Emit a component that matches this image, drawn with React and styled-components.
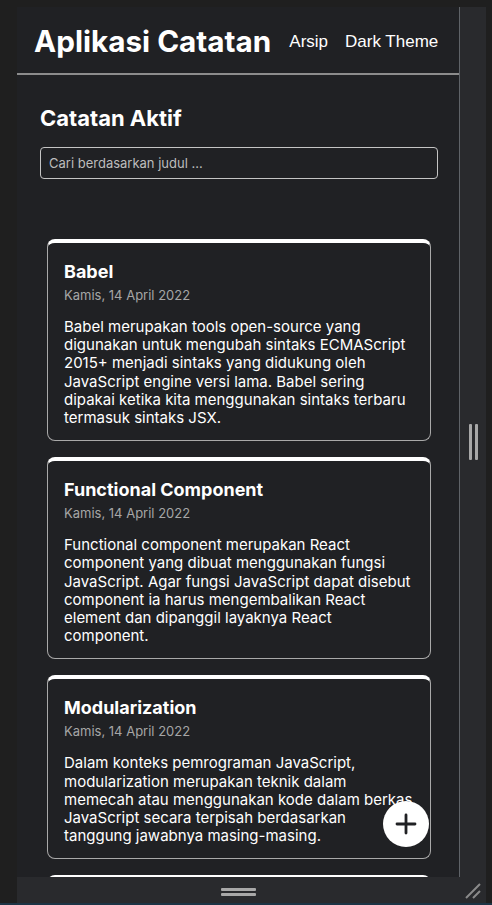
import React from 'react';
import styled, { createGlobalStyle } from 'styled-components';

const GlobalStyle = createGlobalStyle`
  html, body {
    margin: 0;
    padding: 0;
    background: #1f1f1f;
  }
  body {
    font-family: Inter, "Noto Sans", sans-serif;
  }
  * {
    box-sizing: border-box;
  }
`;

const notes = [
  {
    id: 1,
    title: 'Babel',
    date: 'Kamis, 14 April 2022',
    body: 'Babel merupakan tools open-source yang digunakan untuk mengubah sintaks ECMAScript 2015+ menjadi sintaks yang didukung oleh JavaScript engine versi lama. Babel sering dipakai ketika kita menggunakan sintaks terbaru termasuk sintaks JSX.',
  },
  {
    id: 2,
    title: 'Functional Component',
    date: 'Kamis, 14 April 2022',
    body: 'Functional component merupakan React component yang dibuat menggunakan fungsi JavaScript. Agar fungsi JavaScript dapat disebut component ia harus mengembalikan React element dan dipanggil layaknya React component.',
  },
  {
    id: 3,
    title: 'Modularization',
    date: 'Kamis, 14 April 2022',
    body: 'Dalam konteks pemrograman JavaScript, modularization merupakan teknik dalam memecah atau menggunakan kode dalam berkas JavaScript secara terpisah berdasarkan tanggung jawabnya masing-masing.',
  },
  {
    id: 4,
    title: 'Lifecycle',
    date: 'Kamis, 14 April 2022',
    body: 'Dalam konteks React component, lifecycle merupakan kumpulan method yang menjadi siklus hidup mulai dari component dibuat (constructor), dicetak (render), pasca-cetak (componentDidMount), dan sebagainya.',
  },
];

const Frame = styled.div`
  width: 492px;
  height: 905px;
  padding: 7px 6px 0 17px;
  display: flex;
  flex-direction: column;
  overflow: hidden;
`;

const DeviceRow = styled.div`
  display: flex;
  height: 870px;
`;

const Viewport = styled.div`
  position: relative;
  width: 443px;
  height: 870px;
  background: #202124;
  border-right: 1px solid #5f6368;
  overflow: hidden;
`;

const SidePanel = styled.div`
  width: 26px;
  background: #292a2d;
  display: flex;
  align-items: center;
  justify-content: center;
  gap: 3px;
`;

const VGrip = styled.span`
  width: 3px;
  height: 36px;
  background: #a8a8a8;
  border-radius: 1px;
`;

const BottomBar = styled.div`
  display: flex;
  height: 26px;
  background: #292a2d;
`;

const BottomHandle = styled.div`
  width: 443px;
  display: flex;
  flex-direction: column;
  align-items: center;
  justify-content: center;
  gap: 2px;
  padding-top: 4px;
`;

const HGrip = styled.span`
  width: 35px;
  height: 3px;
  background: #a8a8a8;
  border-radius: 1px;
`;

const Corner = styled.div`
  width: 26px;
  display: flex;
  align-items: flex-end;
  justify-content: flex-end;
  padding: 0 5px 4px 0;
`;

const BottomEdge = styled.div`
  height: 2px;
  background: #1d3445;
  margin-left: -17px;
  margin-right: -6px;
`;

const Header = styled.header`
  height: 68px;
  padding: 1px 17px 0;
  display: flex;
  align-items: center;
  gap: 18px;
  border-bottom: 2px solid #8c8c8c;
`;

const AppTitle = styled.h1`
  margin: 0;
  font-size: 29.7px;
  font-weight: 700;
  color: #ffffff;
  white-space: nowrap;
`;

const Nav = styled.nav`
  display: flex;
  gap: 17px;
  padding-top: 2px;
`;

const NavItem = styled.span`
  font-family: "Liberation Sans", Arial, sans-serif;
  font-size: 17px;
  color: #ffffff;
  white-space: nowrap;
`;

const Main = styled.main`
  padding: 0 21px 0 23px;
`;

const PageTitle = styled.h2`
  margin: 30px 0 16px;
  font-size: 22px;
  line-height: 26px;
  font-weight: 700;
  color: #ffffff;
`;

const SearchInput = styled.input`
  display: block;
  width: 398px;
  height: 32px;
  padding: 0 8px;
  border: 1px solid #c4c4c4;
  border-radius: 4px;
  background: transparent;
  color: #ffffff;
  font-family: Inter, "Noto Sans", sans-serif;
  font-size: 13px;
  outline: none;

  &::placeholder {
    color: #bdbdbd;
  }
`;

const NotesList = styled.section`
  margin-top: 60px;
  padding: 0 7px;
  display: flex;
  flex-direction: column;
  gap: 16px;
`;

const Card = styled.article`
  border: 1px solid #a9a9a9;
  border-top: 4px solid #ffffff;
  border-radius: 8px;
  padding: 17px 16px 13px;
  color: #ffffff;
`;

const CardTitle = styled.h3`
  margin: 0;
  font-size: 18px;
  line-height: 24px;
  font-weight: 700;
`;

const CardDate = styled.p`
  margin: 3px 0 0;
  font-size: 13px;
  line-height: 16px;
  color: #a6a6a6;
`;

const CardBody = styled.p`
  margin: 15px 0 0;
  font-size: 15px;
  line-height: 18.2px;
`;

const Fab = styled.button`
  position: absolute;
  right: 30px;
  bottom: 30px;
  width: 46px;
  height: 46px;
  border: none;
  border-radius: 50%;
  background: #ffffff;
  display: flex;
  align-items: center;
  justify-content: center;
  padding: 0;
  cursor: pointer;
`;

const PlusIcon = () => (
  <svg width="22" height="22" viewBox="0 0 22 22">
    <path d="M11 2v18M2 11h18" stroke="#202124" strokeWidth="2.8" strokeLinecap="round" />
  </svg>
);

const CornerIcon = () => (
  <svg width="16" height="16" viewBox="0 0 16 16">
    <path d="M1 15L15 1M8 15L15 8" stroke="#8a8a8a" strokeWidth="2" />
  </svg>
);

export default function App() {
  return (
    <>
      <GlobalStyle />
      <Frame>
        <DeviceRow>
          <Viewport>
            <Header>
              <AppTitle>Aplikasi Catatan</AppTitle>
              <Nav>
                <NavItem>Arsip</NavItem>
                <NavItem>Dark Theme</NavItem>
              </Nav>
            </Header>
            <Main>
              <PageTitle>Catatan Aktif</PageTitle>
              <SearchInput placeholder="Cari berdasarkan judul ..." />
              <NotesList>
                {notes.map((note) => (
                  <Card key={note.id}>
                    <CardTitle>{note.title}</CardTitle>
                    <CardDate>{note.date}</CardDate>
                    <CardBody>{note.body}</CardBody>
                  </Card>
                ))}
              </NotesList>
            </Main>
            <Fab aria-label="Tambah">
              <PlusIcon />
            </Fab>
          </Viewport>
          <SidePanel>
            <VGrip />
            <VGrip />
          </SidePanel>
        </DeviceRow>
        <BottomBar>
          <BottomHandle>
            <HGrip />
            <HGrip />
          </BottomHandle>
          <Corner>
            <CornerIcon />
          </Corner>
        </BottomBar>
        <BottomEdge />
      </Frame>
    </>
  );
}
